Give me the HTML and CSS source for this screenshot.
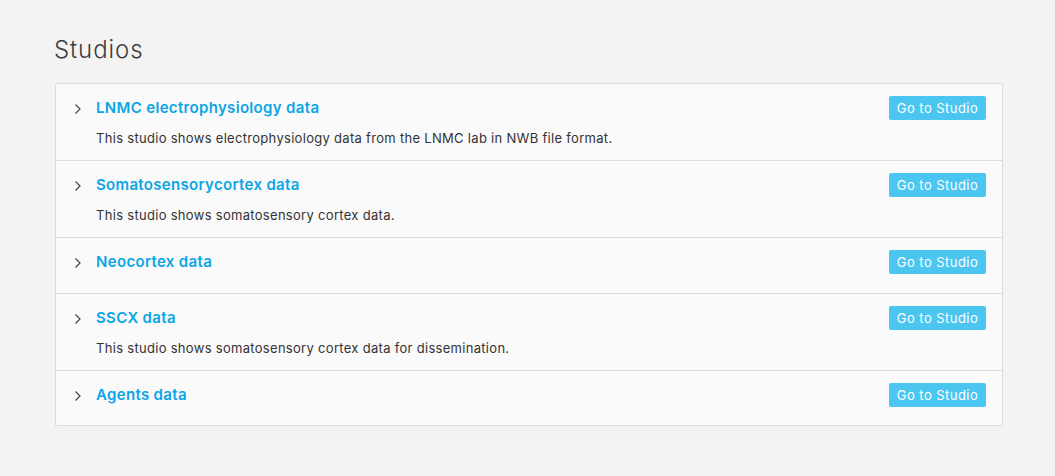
FILE: index.html
```html
<!DOCTYPE html>
<html>
<head>
<meta charset="utf-8">
<link rel="stylesheet" href="styles.css">
</head>
<body>
<main class="page">
  <h1 class="page-title">Studios</h1>
  <div class="studio-list">
    <div class="studio has-desc">
      <div class="studio-head">
        <svg class="chevron" width="8" height="12" viewBox="0 0 8 12"><path d="M1.5 1.5 L6 6 L1.5 10.5" fill="none" stroke="#444" stroke-width="1.2"/></svg>
        <a class="studio-name">LNMC electrophysiology data</a>
        <button class="go-btn">Go to Studio</button>
      </div>
      <p class="studio-desc">This studio shows electrophysiology data from the LNMC lab in NWB file format.</p>
    </div>
    <div class="studio has-desc">
      <div class="studio-head">
        <svg class="chevron" width="8" height="12" viewBox="0 0 8 12"><path d="M1.5 1.5 L6 6 L1.5 10.5" fill="none" stroke="#444" stroke-width="1.2"/></svg>
        <a class="studio-name">Somatosensorycortex data</a>
        <button class="go-btn">Go to Studio</button>
      </div>
      <p class="studio-desc">This studio shows somatosensory cortex data.</p>
    </div>
    <div class="studio">
      <div class="studio-head">
        <svg class="chevron" width="8" height="12" viewBox="0 0 8 12"><path d="M1.5 1.5 L6 6 L1.5 10.5" fill="none" stroke="#444" stroke-width="1.2"/></svg>
        <a class="studio-name">Neocortex data</a>
        <button class="go-btn">Go to Studio</button>
      </div>
    </div>
    <div class="studio has-desc">
      <div class="studio-head">
        <svg class="chevron" width="8" height="12" viewBox="0 0 8 12"><path d="M1.5 1.5 L6 6 L1.5 10.5" fill="none" stroke="#444" stroke-width="1.2"/></svg>
        <a class="studio-name">SSCX data</a>
        <button class="go-btn">Go to Studio</button>
      </div>
      <p class="studio-desc">This studio shows somatosensory cortex data for dissemination.</p>
    </div>
    <div class="studio">
      <div class="studio-head">
        <svg class="chevron" width="8" height="12" viewBox="0 0 8 12"><path d="M1.5 1.5 L6 6 L1.5 10.5" fill="none" stroke="#444" stroke-width="1.2"/></svg>
        <a class="studio-name">Agents data</a>
        <button class="go-btn">Go to Studio</button>
      </div>
    </div>
  </div>
</main>
</body>
</html>
```
FILE: styles.css
```css
html, body {
  margin: 0;
  padding: 0;
  background: #f3f3f3;
  font-family: Inter, "Noto Sans", "Liberation Sans", sans-serif;
}
.page {
  padding: 34px 52px 0 55px;
}
.page-title {
  margin: 0 0 18px -1px;
  font-size: 24px;
  line-height: 31px;
  font-weight: 300;
  letter-spacing: 0.9px;
  color: #3d3d3d;
}
.studio-list {
  background: #fafafa;
  border: 1px solid #dcdcdc;
  border-radius: 2px;
  box-shadow: 0 1px 0 #e2e2e2;
}
.studio {
  padding: 12px 16px 19px 18px;
  border-top: 1px solid #dcdcdc;
}
.studio:first-child {
  border-top: none;
}
.studio:last-child {
  padding-bottom: 18px;
}
.studio.has-desc {
  padding-bottom: 12px;
}
.studio-head {
  display: flex;
  align-items: center;
  height: 24px;
}
.chevron {
  flex: none;
  margin-right: 14px;
  margin-top: 1px;
}
.studio-name {
  flex: 1;
  font-size: 15px;
  font-weight: 600;
  letter-spacing: 0.33px;
  color: #0aa5e6;
  text-decoration: none;
  margin-top: -2px;
}
.go-btn {
  flex: none;
  height: 24px;
  width: 97px;
  padding: 0;
  border: none;
  border-radius: 2px;
  background: #4ac6f0;
  color: #fff;
  font-family: inherit;
  font-size: 13px;
  font-weight: 400;
  letter-spacing: 0.45px;
}
.studio-desc {
  margin: 8px 0 0 22px;
  font-size: 13px;
  line-height: 20px;
  letter-spacing: 0.3px;
  color: #333;
}
```
